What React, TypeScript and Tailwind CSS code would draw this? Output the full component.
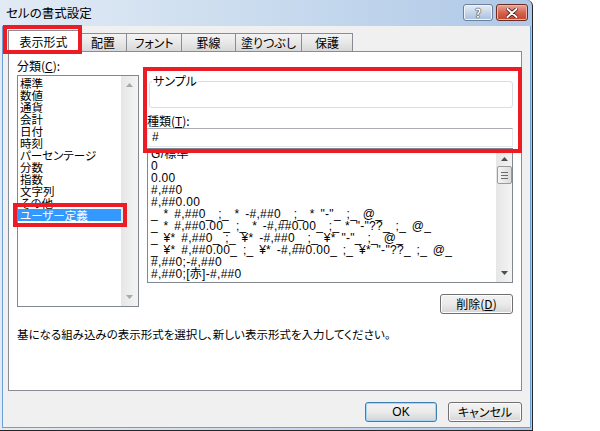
import React from "react";

const FONT = "font-['Noto_Sans_CJK_JP','Noto_Sans',sans-serif] [font-feature-settings:'palt']";

const categories = [
  "標準",
  "数値",
  "通貨",
  "会計",
  "日付",
  "時刻",
  "パーセンテージ",
  "分数",
  "指数",
  "文字列",
  "その他",
  "ユーザー定義",
];

const formats = [
  "G/標準",
  "0",
  "0.00",
  "#,##0",
  "#,##0.00",
  '_ * #,##0_ ;_ * -#,##0_ ;_ * "-"_ ;_ @_',
  '_ * #,##0.00_ ;_ * -#,##0.00_ ;_ * "-"??_ ;_ @_',
  '_ ¥* #,##0_ ;_ ¥* -#,##0_ ;_ ¥* "-"_ ;_ @_',
  '_ ¥* #,##0.00_ ;_ ¥* -#,##0.00_ ;_ ¥* "-"??_ ;_ @_',
  "#,##0;-#,##0",
  "#,##0;[赤]-#,##0",
];

function Arrow({ up, color = "#4d4d4d" }: { up?: boolean; color?: string }) {
  return (
    <svg width="7" height="4" viewBox="0 0 7 4">
      {up ? (
        <polygon points="3.5,0 7,4 0,4" fill={color} />
      ) : (
        <polygon points="0,0 7,0 3.5,4" fill={color} />
      )}
    </svg>
  );
}

function Tab({ label, w }: { label: string; w: string }) {
  return (
    <div
      className={`${w} h-[18px] border-t border-l border-[#898c95] bg-gradient-to-b from-[#f3f3f3] via-[#e8e8e8] to-[#d8d8d8] flex items-center justify-center text-[12px] leading-[12px] text-black`}
    >
      {label}
    </div>
  );
}

function Btn({ children, def, w }: { children: React.ReactNode; def?: boolean; w: string }) {
  return (
    <div
      className={`${w} h-[20px] rounded-[3px] border ${
        def ? "border-[#3c7fb1] shadow-[inset_0_0_0_1px_#a6d6f5]" : "border-[#707070] shadow-[inset_0_0_0_1px_#fcfcfc]"
      } bg-gradient-to-b from-[#f2f2f2] via-[#ebebeb] to-[#d4d4d4] flex items-center justify-center text-[12px] leading-[12px] text-black`}
    >
      {children}
    </div>
  );
}

export default function App() {
  return (
    <div className={`relative w-[600px] h-[431px] bg-white overflow-hidden ${FONT}`}>
      {/* window */}
      <div className="w-[533px] h-[431px] border-r border-b border-[#262626] rounded-tr-[6px] flex flex-col bg-gradient-to-r from-[#e2ebf5] via-[#c9dbee] to-[#afc8e7]">
        {/* title bar */}
        <div className="h-[26px] flex items-start pl-[6px] pr-[4px]">
          <div className="mt-[6px] text-[12.5px] leading-[14px] text-black">セルの書式設定</div>
          <div className="ml-auto mt-[4px] flex gap-[3px]">
            <div className="w-[30px] h-[17px] rounded-[3px] border border-[#6e7f99] bg-gradient-to-b from-[#e4edf7] via-[#c6d6ea] to-[#a9bfdc] shadow-[inset_0_0_0_1px_#eef4fb] flex items-center justify-center">
              <span className="text-[12px] leading-[12px] font-bold text-white [text-shadow:0_0_1px_#333,0_0_1px_#333,0_0_1px_#333]">?</span>
            </div>
            <div className="w-[32px] h-[17px] rounded-[3px] border border-[#6b2a22] bg-gradient-to-b from-[#e9a898] via-[#d6634e] to-[#c4432c] shadow-[inset_0_0_0_1px_#eeb6a8] flex items-center justify-center">
              <svg width="12" height="10" viewBox="0 0 12 10">
                <path d="M1.5 1 L10.5 9 M10.5 1 L1.5 9" stroke="#4a1a14" strokeWidth="3.6" strokeLinecap="round" />
                <path d="M1.5 1 L10.5 9 M10.5 1 L1.5 9" stroke="#ffffff" strokeWidth="2" strokeLinecap="round" />
              </svg>
            </div>
          </div>
        </div>

        {/* client */}
        <div className="flex-1 ml-[2px] mr-[1px] mb-[2px] border-l border-r border-b border-[#6d9fd5] bg-[#f0f0f0] flex flex-col pl-[5px]">
          {/* tabs */}
          <div className="h-[25px] flex items-end">
            <div className="w-[71px] h-[22px] border-t border-l border-r border-[#898c95] bg-white -mb-px relative z-10 flex items-center justify-center text-[12px] leading-[12px]">
              表示形式
            </div>
            <Tab label="配置" w="w-[47px]" />
            <Tab label="フォント" w="w-[55px]" />
            <Tab label="罫線" w="w-[54px]" />
            <Tab label="塗りつぶし" w="w-[66px]" />
            <div className="w-[52px] h-[18px] border-t border-l border-r border-[#898c95] bg-gradient-to-b from-[#f3f3f3] via-[#e8e8e8] to-[#d8d8d8] flex items-center justify-center text-[12px] leading-[12px]">
              保護
            </div>
          </div>

          {/* panel */}
          <div className="w-[514px] h-[340px] border border-[#898c95] bg-white pl-[8px] pt-[6px] flex flex-col">
            <div className="flex gap-[8px]">
              {/* left column */}
              <div className="w-[122px] flex flex-col">
                <div className="h-[17px] text-[12px] leading-[16px]">
                  分類(<span className="underline">C</span>):
                </div>
                <div className="h-[232px] border border-[#828790] flex">
                  <div className="flex-1 pt-[1px] overflow-hidden">
                    {categories.map((c, i) => (
                      <div
                        key={c}
                        className={`h-[12px] pl-[2px] text-[11.5px] leading-[12px] whitespace-nowrap ${
                          i === categories.length - 1 ? "bg-[#3399ff] text-white" : "text-black"
                        }`}
                      >
                        {c}
                      </div>
                    ))}
                  </div>
                  <div className="w-[17px] bg-gradient-to-r from-[#e6e6e6] to-[#f4f4f4] flex flex-col items-center justify-between py-[7px]">
                    <Arrow up color="#a8a8a8" />
                    <Arrow color="#a8a8a8" />
                  </div>
                </div>
              </div>

              {/* right column */}
              <div className="w-[366px] flex flex-col">
                <fieldset className="ml-[2px] mt-[17px] h-[33px] border border-[#d5dfe5] rounded-[3px]">
                  <legend className="ml-[2px] px-[1px] text-[12px] leading-[12px]">サンプル</legend>
                </fieldset>
                <div className="mt-[5px] h-[15px] text-[12px] leading-[15px]">
                  種類(<span className="underline">T</span>):
                </div>
                <div className="h-[19px] border border-[#e3e9ef] border-t-[#abadb3] bg-white pl-[4px] text-[12px] leading-[17px] font-['Liberation_Sans',sans-serif]">
                  #
                </div>
                <div className="mt-[1px] h-[135px] border border-[#828790] flex">
                  <div className="flex-1 pl-[3px] overflow-hidden font-['Liberation_Sans','Noto_Sans_CJK_JP',sans-serif]">
                    {formats.map((f) => (
                      <div
                        key={f}
                        className="h-[12px] text-[12px] leading-[11px] tracking-[0.3px] [word-spacing:2px] whitespace-pre text-black"
                      >
                        {f}
                      </div>
                    ))}
                  </div>
                  <div className="w-[16px] bg-gradient-to-r from-[#e6e6e6] to-[#f4f4f4] flex flex-col items-center pt-[8px] pb-[7px]">
                    <Arrow up />
                    <div className="mt-[5px] w-[15px] h-[18px] rounded-[2px] border border-[#9a9a9a] bg-gradient-to-r from-[#f5f5f5] to-[#dcdcdc] flex flex-col items-center justify-center gap-[2px]">
                      <div className="w-[7px] h-px bg-[#6b6b6b]" />
                      <div className="w-[7px] h-px bg-[#6b6b6b]" />
                      <div className="w-[7px] h-px bg-[#6b6b6b]" />
                    </div>
                    <div className="flex-1" />
                    <Arrow />
                  </div>
                </div>
                <div className="mt-[11px] flex justify-end">
                  <Btn w="w-[73px]">
                    削除(<span className="underline">D</span>)
                  </Btn>
                </div>
              </div>
            </div>
            <div className="mt-[13px] h-[14px] text-[11.5px] leading-[14px] tracking-[0px] whitespace-nowrap">
              基になる組み込みの表示形式を選択し、新しい表示形式を入力してください。
            </div>
          </div>

          {/* bottom buttons */}
          <div className="w-[514px] mt-[11px] flex justify-end gap-[11px]">
            <Btn def w="w-[72px]">
              <span className="font-['Liberation_Sans',sans-serif]">OK</span>
            </Btn>
            <Btn w="w-[74px]">キャンセル</Btn>
          </div>
        </div>
      </div>

      {/* red annotation boxes */}
      <div className="absolute left-[3px] top-[25px] w-[79px] h-[29px] border-[4px] border-[#ed1c24] z-20" />
      <div className="absolute left-[143px] top-[67px] w-[379px] h-[86px] border-[4px] border-[#ed1c24] z-20" />
      <div className="absolute left-[13px] top-[203px] w-[114px] h-[24px] border-[4px] border-[#ed1c24] z-20" />
    </div>
  );
}
